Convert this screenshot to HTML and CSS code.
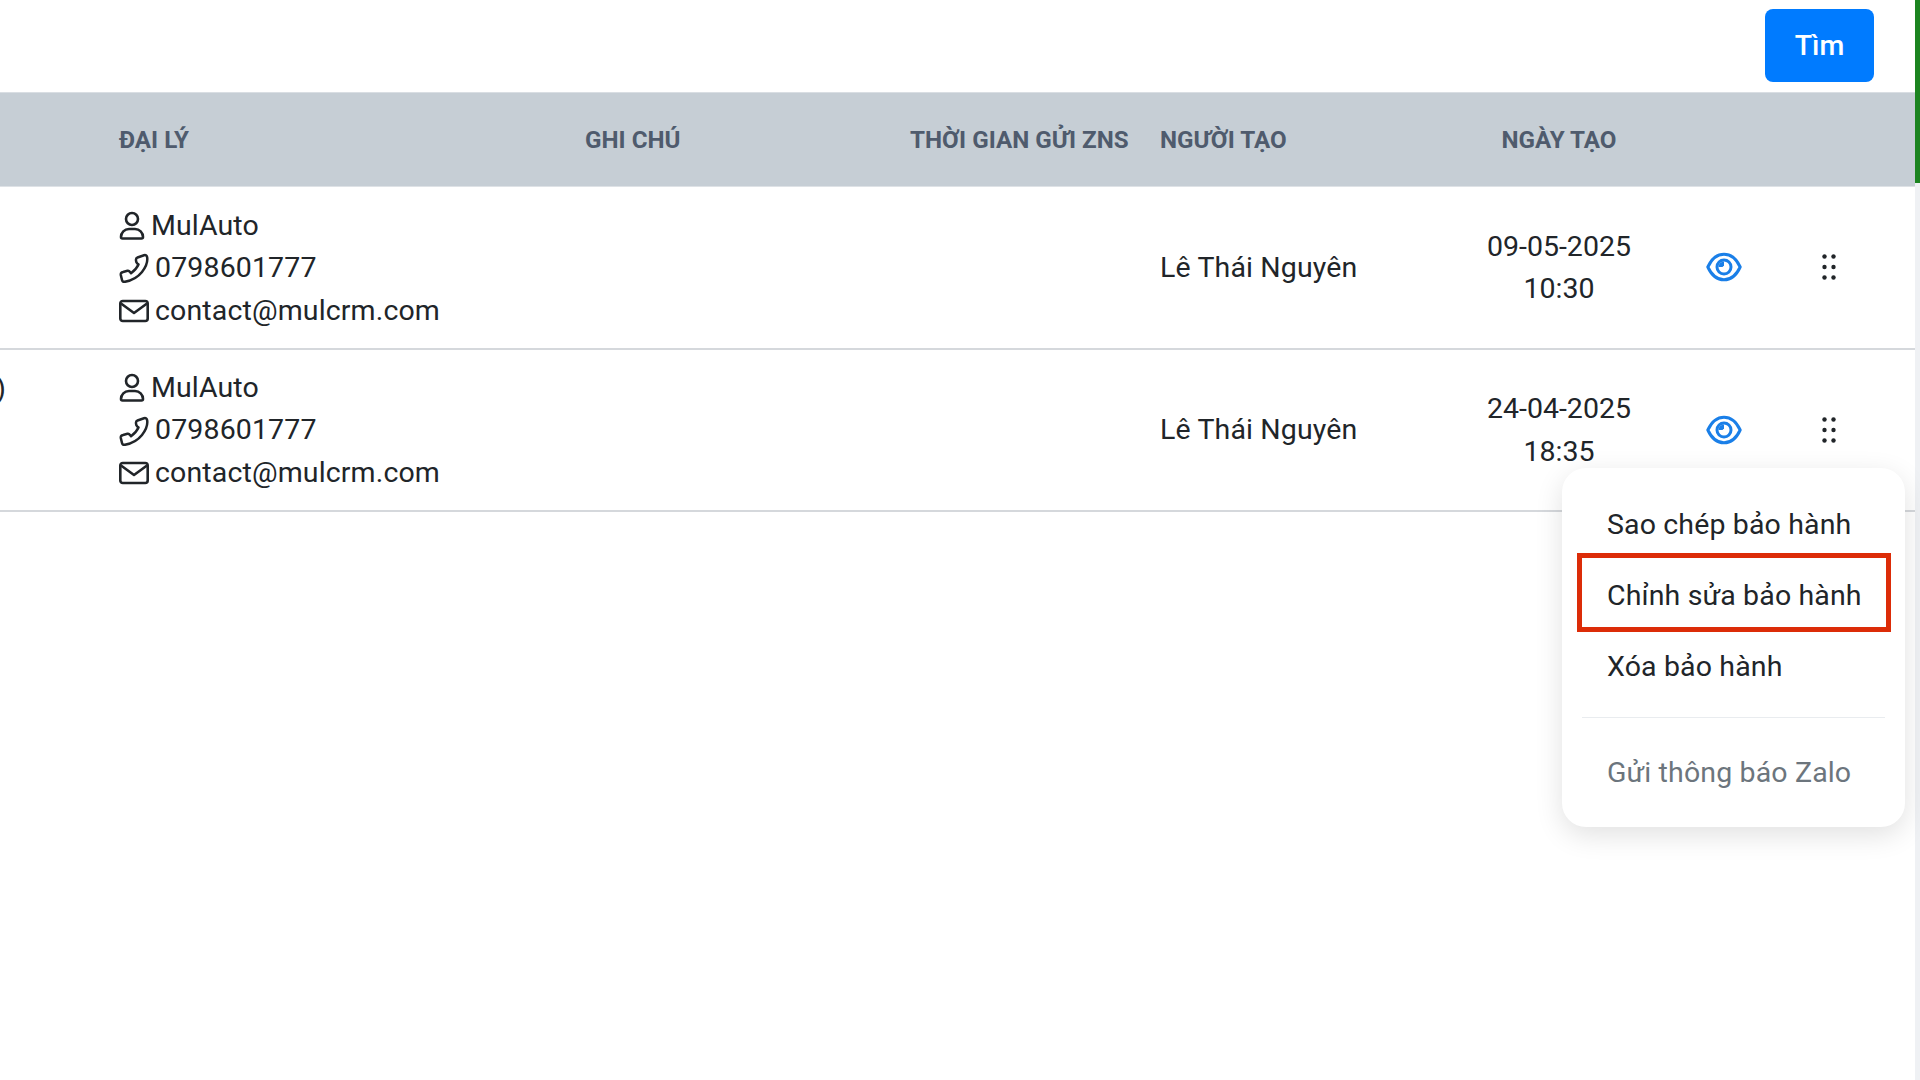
FILE: index.html
```html
<!DOCTYPE html>
<html lang="vi">

<head>
    <meta charset="UTF-8">
    <title>Bảo hành</title>
    <link rel="stylesheet" href="styles.css">
</head>

<body>
    <svg class="sprite" width="0" height="0">
        <symbol id="i-user" viewBox="0 0 26 30">
            <circle cx="13" cy="8" r="6" fill="none" stroke="currentColor" stroke-width="2.6" />
            <path d="M3.500 27.500h19a1.500 1.500 0 0 0 1.500-1.500c0-4.500-3.500-8-8-8h-6c-4.500 0-8 3.500-8 8a1.500 1.500 0 0 0 1.500 1.500z" fill="none" stroke="currentColor" stroke-width="2.600" stroke-linejoin="round" />
        </symbol>
        <symbol id="i-phone" viewBox="0 0 30 30">
            <path d="M18.500 4.500L25 2.200Q27.500 1.500 28.100 4C29 9 27 14 23 19C19 24 13 27.500 6 28.800Q3.500 29.300 3 27L1.800 22Q1.500 19.500 4 19L8.500 17.800Q10 17.500 11 19L12 20.200C15 18 18 15 19.500 11.500L18.200 10.300Q17 9 17 7.500L17 6.500Q17 5 18.500 4.500z" fill="none" stroke="currentColor" stroke-width="2.500" stroke-linejoin="round" />
        </symbol>
        <symbol id="i-mail" viewBox="0 0 30 30">
            <rect x="1.300" y="5" width="27.400" height="20" rx="2.500" fill="none" stroke="currentColor" stroke-width="2.600" />
            <path d="M2 7.500l13 9.500 13-9.500" fill="none" stroke="currentColor" stroke-width="2.600" stroke-linejoin="round" />
        </symbol>
        <symbol id="i-eye" viewBox="0 0 36 30">
            <path d="M1.800 15C5.500 7 11 2.200 18 2.200S30.500 7 34.200 15C30.500 23 25 27.800 18 27.800S5.500 23 1.800 15z" fill="none" stroke="currentColor" stroke-width="3" stroke-linejoin="round" />
            <circle cx="18" cy="15" r="7" fill="none" stroke="currentColor" stroke-width="3" />
            <path d="M18 9.500a5.500 5.500 0 0 0-5.500 5.500h4l1.500-1.500z" fill="currentColor" />
        </symbol>
        <symbol id="i-dots" viewBox="0 0 14 26">
            <circle cx="2.500" cy="2.500" r="2.200" />
            <circle cx="11.500" cy="2.500" r="2.200" />
            <circle cx="2.500" cy="13" r="2.200" />
            <circle cx="11.500" cy="13" r="2.200" />
            <circle cx="2.500" cy="23.500" r="2.200" />
            <circle cx="11.500" cy="23.500" r="2.200" />
        </symbol>
    </svg>

    <div class="page">
        <main class="content">
            <div class="toolbar">
                <button class="btn-search" type="button">Tìm</button>
            </div>

            <table class="list">
                <colgroup>
                    <col class="col-first">
                    <col class="col-agent">
                    <col class="col-note">
                    <col class="col-time">
                    <col class="col-author">
                    <col class="col-date">
                    <col class="col-view">
                    <col class="col-more">
                </colgroup>
                <thead>
                    <tr>
                        <th></th>
                        <th>ĐẠI LÝ</th>
                        <th>GHI CHÚ</th>
                        <th>THỜI GIAN GỬI ZNS</th>
                        <th>NGƯỜI TẠO</th>
                        <th class="center">NGÀY TẠO</th>
                        <th></th>
                        <th></th>
                    </tr>
                </thead>
                <tbody>
                    <tr>
                        <td></td>
                        <td>
                            <div class="contact"><svg class="ic-user"><use href="#i-user" /></svg>MulAuto</div>
                            <div class="contact"><svg class="ic-line"><use href="#i-phone" /></svg>0798601777</div>
                            <div class="contact"><svg class="ic-line"><use href="#i-mail" /></svg>contact@mulcrm.com</div>
                        </td>
                        <td></td>
                        <td></td>
                        <td>Lê Thái Nguyên</td>
                        <td class="center date">09-05-2025<br>10:30</td>
                        <td class="center icon-cell"><svg class="ic-eye"><use href="#i-eye" /></svg></td>
                        <td class="more icon-cell"><svg class="ic-dots"><use href="#i-dots" /></svg></td>
                    </tr>
                    <tr>
                        <td class="cut">)</td>
                        <td>
                            <div class="contact"><svg class="ic-user"><use href="#i-user" /></svg>MulAuto</div>
                            <div class="contact"><svg class="ic-line"><use href="#i-phone" /></svg>0798601777</div>
                            <div class="contact"><svg class="ic-line"><use href="#i-mail" /></svg>contact@mulcrm.com</div>
                        </td>
                        <td></td>
                        <td></td>
                        <td>Lê Thái Nguyên</td>
                        <td class="center date">24-04-2025<br>18:35</td>
                        <td class="center icon-cell"><svg class="ic-eye"><use href="#i-eye" /></svg></td>
                        <td class="more icon-cell"><svg class="ic-dots"><use href="#i-dots" /></svg></td>
                    </tr>
                </tbody>
            </table>

            <ul class="menu">
                <li class="menu-item">Sao chép bảo hành</li>
                <li class="menu-item marked">Chỉnh sửa bảo hành</li>
                <li class="menu-item">Xóa bảo hành</li>
                <li class="menu-divider"></li>
                <li class="menu-item muted">Gửi thông báo Zalo</li>
            </ul>
        </main>

        <div class="rail">
            <div class="rail-green"></div>
        </div>
    </div>
</body>

</html>
```

FILE: styles.css
```css
* {
    box-sizing: border-box;
}

html,
body {
    height: 100%;
    overflow: hidden;
}

body {
    margin: 0;
    font-family: Roboto, "Liberation Sans", sans-serif;
    font-size: 28.5px;
    line-height: 42.5px;
    letter-spacing: 0.14px;
    color: #212529;
    background-color: #fff;
}

.sprite {
    position: absolute;
}

.page {
    display: flex;
    height: 100%;
}

.content {
    position: relative;
    flex: 1;
    min-width: 0;
}

.rail {
    width: 5px;
    background-color: #eff1f4;
}

.rail-green {
    height: 183px;
    background-color: #1c8420;
}

.toolbar {
    display: flex;
    justify-content: flex-end;
    align-items: flex-start;
    height: 92px;
    padding: 9px 41px 0 0;
}

.btn-search {
    width: 109px;
    height: 73px;
    border: none;
    border-radius: 8px;
    background-color: #007bff;
    color: #fff;
    font-family: inherit;
    font-size: 28.5px;
    font-weight: 500;
}

.list {
    width: 100%;
    table-layout: fixed;
    border-collapse: collapse;
}

.col-first { width: 103px; }
.col-agent { width: 466px; }
.col-note { width: 325px; }
.col-time { width: 250px; }
.col-author { width: 297px; }
.col-date { width: 236px; }
.col-view { width: 94px; }
.col-more { width: 144px; }

.list th {
    height: 94px;
    padding: 1px 16px 0;
    background-color: #c6ced5;
    border-top: 1px solid #d9dee3;
    border-bottom: 1px solid #dee2e6;
    color: #4f5b6d;
    font-size: 24.2px;
    font-weight: 700;
    letter-spacing: 0;
    text-align: left;
    white-space: nowrap;
}

.list td {
    height: 162px;
    padding: 2px 16px 0;
    border-bottom: 2px solid #d5d8dc;
    white-space: nowrap;
}

.list .center {
    text-align: center;
}

.list .date {
    letter-spacing: 0;
}

.list .more {
    padding-right: 44px;
}

.list .icon-cell {
    padding-top: 0;
}

.list td.cut {
    padding: 18px 0 0;
    vertical-align: top;
    text-indent: -4px;
}

.contact {
    display: flex;
    align-items: center;
    gap: 6px;
    height: 42.5px;
}

.ic-user {
    width: 26px;
    height: 30px;
}

.ic-line {
    width: 30px;
    height: 30px;
}

.ic-eye {
    display: block;
    width: 36px;
    height: 30px;
    margin: 0 auto;
    color: #1a7fe8;
}

.ic-dots {
    display: block;
    width: 14px;
    height: 26px;
    margin: 0 auto;
    fill: #212529;
}

.menu {
    position: absolute;
    top: 468px;
    left: 1562px;
    width: 343px;
    margin: 0;
    padding: 20px;
    list-style: none;
    background-color: #fff;
    border-radius: 24px;
    box-shadow: 0 8px 28px rgba(0, 0, 0, 0.12);
}

.menu-item {
    position: relative;
    height: 71px;
    padding: 1px 0 0 25px;
    line-height: 71px;
    white-space: nowrap;
}

.menu-item.muted {
    color: #6c757d;
}

.menu-item.marked::after {
    content: "";
    position: absolute;
    top: -6px;
    right: -6px;
    bottom: -2px;
    left: -5px;
    border: 5px solid #dc2c08;
}

.menu-divider {
    height: 1px;
    margin: 16px 0 18px;
    background-color: #e9ecef;
}
```
